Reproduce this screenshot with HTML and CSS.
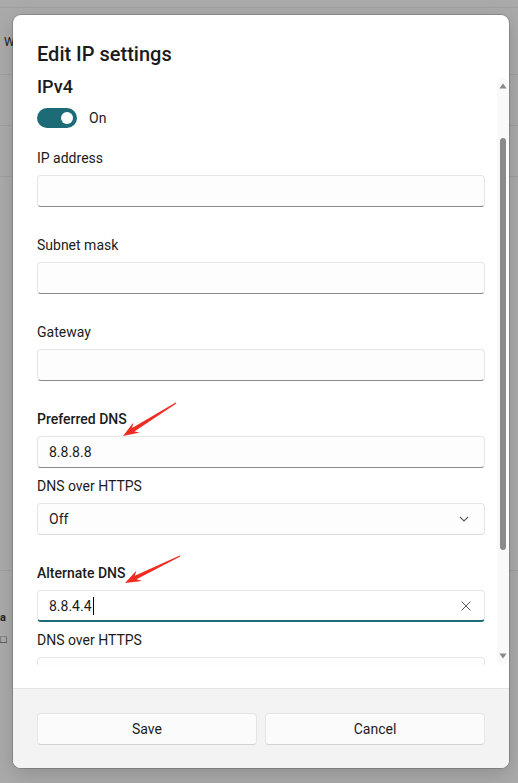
FILE: index.html
```html
<!DOCTYPE html>
<html lang="en">
<head>
<meta charset="utf-8">
<title>Edit IP settings</title>
<link rel="stylesheet" href="styles.css">
</head>
<body>
<!-- settings page dimmed behind the dialog -->
<div class="page">
  <div class="page-row row-top"></div>
  <div class="page-row row-a"><span class="page-text">W</span></div>
  <div class="page-row row-b"></div>
  <div class="page-row row-c"></div>
  <div class="page-row row-d"></div>
  <div class="page-row row-e">
    <span class="page-glyph strong">a</span>
    <span class="page-glyph">□</span>
  </div>
</div>

<div class="dialog">
  <h1 class="dialog-title">Edit IP settings</h1>

  <div class="dialog-body">
    <div class="form">
      <h2 class="section-title">IPv4</h2>
      <div class="toggle-row">
        <span class="toggle"><span class="toggle-knob"></span></span>
        <span class="toggle-label">On</span>
      </div>

      <div class="field first">
        <label class="field-label">IP address</label>
        <div class="input"></div>
      </div>

      <div class="field">
        <label class="field-label">Subnet mask</label>
        <div class="input"></div>
      </div>

      <div class="field">
        <label class="field-label">Gateway</label>
        <div class="input"></div>
      </div>

      <div class="field">
        <label class="field-label strong">Preferred DNS</label>
        <div class="input">8.8.8.8</div>
        <div class="subfield">
          <label class="field-label">DNS over HTTPS</label>
          <div class="input select">
            <span>Off</span>
            <svg class="chevron" width="10" height="6" viewBox="0 0 10 6"><path d="M1 1 L5 5 L9 1" fill="none" stroke="#5c5c5c" stroke-width="1.1"/></svg>
          </div>
        </div>
      </div>

      <div class="field">
        <label class="field-label strong">Alternate DNS</label>
        <div class="input focused">
          <span class="value">8.8.4.4<span class="caret"></span></span>
          <svg class="clear" width="10" height="10" viewBox="0 0 10 10"><path d="M0.5 0.5 L9.5 9.5 M9.5 0.5 L0.5 9.5" fill="none" stroke="#5c5c5c" stroke-width="1"/></svg>
        </div>
        <div class="subfield">
          <label class="field-label">DNS over HTTPS</label>
          <!-- scrolled below the fold; only its top edge shows -->
          <div class="input select"></div>
        </div>
      </div>
    </div>

    <div class="scrollbar">
      <svg class="scroll-arrow up" width="8" height="6" viewBox="0 0 8 6"><path d="M4 0.5 L7.6 5.5 L0.4 5.5 Z" fill="#8a8a8a"/></svg>
      <div class="scroll-thumb"></div>
      <svg class="scroll-arrow down" width="8" height="6" viewBox="0 0 8 6"><path d="M0.4 0.5 L7.6 0.5 L4 5.5 Z" fill="#8a8a8a"/></svg>
    </div>
  </div>

  <div class="dialog-footer">
    <button class="btn">Save</button>
    <button class="btn">Cancel</button>
  </div>
</div>

<!-- red callout arrows pointing at the DNS fields -->
<svg class="callouts" width="518" height="783" viewBox="0 0 518 783">
  <polygon fill="#ef2b22" points="123,436 139.8,432.6 134.3,431.4 176.3,403.4 175.7,402.6 132.1,428 133.4,422.4"/>
  <polygon fill="#ef2b22" points="125,583 142,581.1 136.6,579.3 180.2,556.5 179.8,555.5 134.8,575.8 136.5,570.4"/>
</svg>
</body>
</html>
```

FILE: styles.css
```css
* {
  box-sizing: border-box;
}

html,
body {
  margin: 0;
  padding: 0;
}

body {
  width: 518px;
  height: 783px;
  overflow: hidden;
  position: relative;
  background: #aaaaaa;
  font-family: "Segoe UI", Roboto, "Noto Sans", sans-serif;
  color: #1b1b1b;
}

/* ---- dimmed page behind ---- */
.page-row {
  border-bottom: 1px solid #9f9f9f;
}

.row-top { height: 8px; }
.row-a { height: 67px; padding: 23px 0 0 4px; }
.row-b { height: 51px; }
.row-c { height: 51px; }
.row-d { height: 394px; }
.row-e {
  border-bottom: none;
  display: flex;
  flex-direction: column;
  align-items: flex-start;
  padding-top: 36px;
}

.page-text {
  font-size: 12px;
  line-height: 20px;
  color: #222;
}

.page-glyph {
  font-size: 11px;
  line-height: 22px;
  color: #222;
}

.page-glyph.strong {
  font-weight: 700;
}

/* ---- dialog ---- */
.dialog {
  position: absolute;
  left: 13px;
  top: 15px;
  width: 496px;
  height: 753px;
  background: #ffffff;
  border-radius: 8px;
  box-shadow: 0 0 0 1px rgba(0, 0, 0, 0.16), 0 6px 20px rgba(0, 0, 0, 0.16);
  display: flex;
  flex-direction: column;
  overflow: hidden;
}

.dialog-title {
  margin: 0;
  height: 53px;
  padding: 25px 24px 0;
  font-size: 20px;
  font-weight: 500;
  line-height: 28px;
}

.dialog-body {
  height: 597px;
  display: flex;
}

.form {
  flex: 1;
  overflow: hidden;
  padding: 7px 12px 0 24px;
}

.section-title {
  margin: 0;
  font-size: 18px;
  font-weight: 500;
  line-height: 24px;
}

.toggle-row {
  margin-top: 9px;
  height: 20px;
  display: flex;
  align-items: center;
  gap: 12px;
}

.toggle {
  width: 40px;
  height: 20px;
  border-radius: 10px;
  background: #1e6b78;
  display: flex;
  align-items: center;
  justify-content: flex-end;
  padding-right: 4px;
}

.toggle-knob {
  width: 12px;
  height: 12px;
  border-radius: 50%;
  background: #ffffff;
}

.toggle-label {
  font-size: 14px;
  line-height: 20px;
}

.field {
  margin-top: 28px;
}

.field.first {
  margin-top: 20px;
}

.subfield {
  margin-top: 8px;
}

.field-label {
  display: block;
  margin-bottom: 7px;
  font-size: 14px;
  line-height: 20px;
}

.field-label.strong {
  font-weight: 500;
}

.input {
  height: 32px;
  border: 1px solid #e6e6e6;
  border-bottom-color: #8a8a8a;
  border-radius: 4px;
  background: #fdfdfd;
  padding: 0 11px;
  display: flex;
  align-items: center;
  justify-content: space-between;
  font-size: 14px;
}

.input.select {
  border-bottom-color: #dadada;
  padding-right: 15px;
}

.input.focused {
  background: #ffffff;
  border-bottom: 2px solid #1e6b78;
  padding-right: 13px;
}

.value {
  display: flex;
  align-items: center;
}

.caret {
  width: 1px;
  height: 18px;
  margin-left: 1px;
  background: #000000;
}

/* ---- scrollbar ---- */
.scrollbar {
  width: 11px;
  margin: 10px 1px 0 0;
  background: #f9f9f9;
  border-radius: 6px;
  display: flex;
  flex-direction: column;
  align-items: center;
  padding-top: 5px;
}

.scroll-thumb {
  width: 6px;
  height: 412px;
  margin-top: 49px;
  border-radius: 3px;
  background: #8a8a8a;
}

.scroll-arrow.down {
  margin-top: 103px;
}

/* ---- footer ---- */
.dialog-footer {
  margin-top: auto;
  height: 80px;
  border-top: 1px solid #e5e5e5;
  background: #f3f3f3;
  padding: 24px 24px 0;
  display: grid;
  grid-template-columns: 1fr 1fr;
  column-gap: 8px;
  align-items: start;
}

.btn {
  height: 32px;
  border: 1px solid #e5e5e5;
  border-bottom-color: #d2d2d2;
  border-radius: 4px;
  background: #fbfbfb;
  font-family: inherit;
  font-size: 14px;
  color: #1b1b1b;
}

/* ---- callouts ---- */
.callouts {
  position: absolute;
  left: 0;
  top: 0;
  pointer-events: none;
}
```
